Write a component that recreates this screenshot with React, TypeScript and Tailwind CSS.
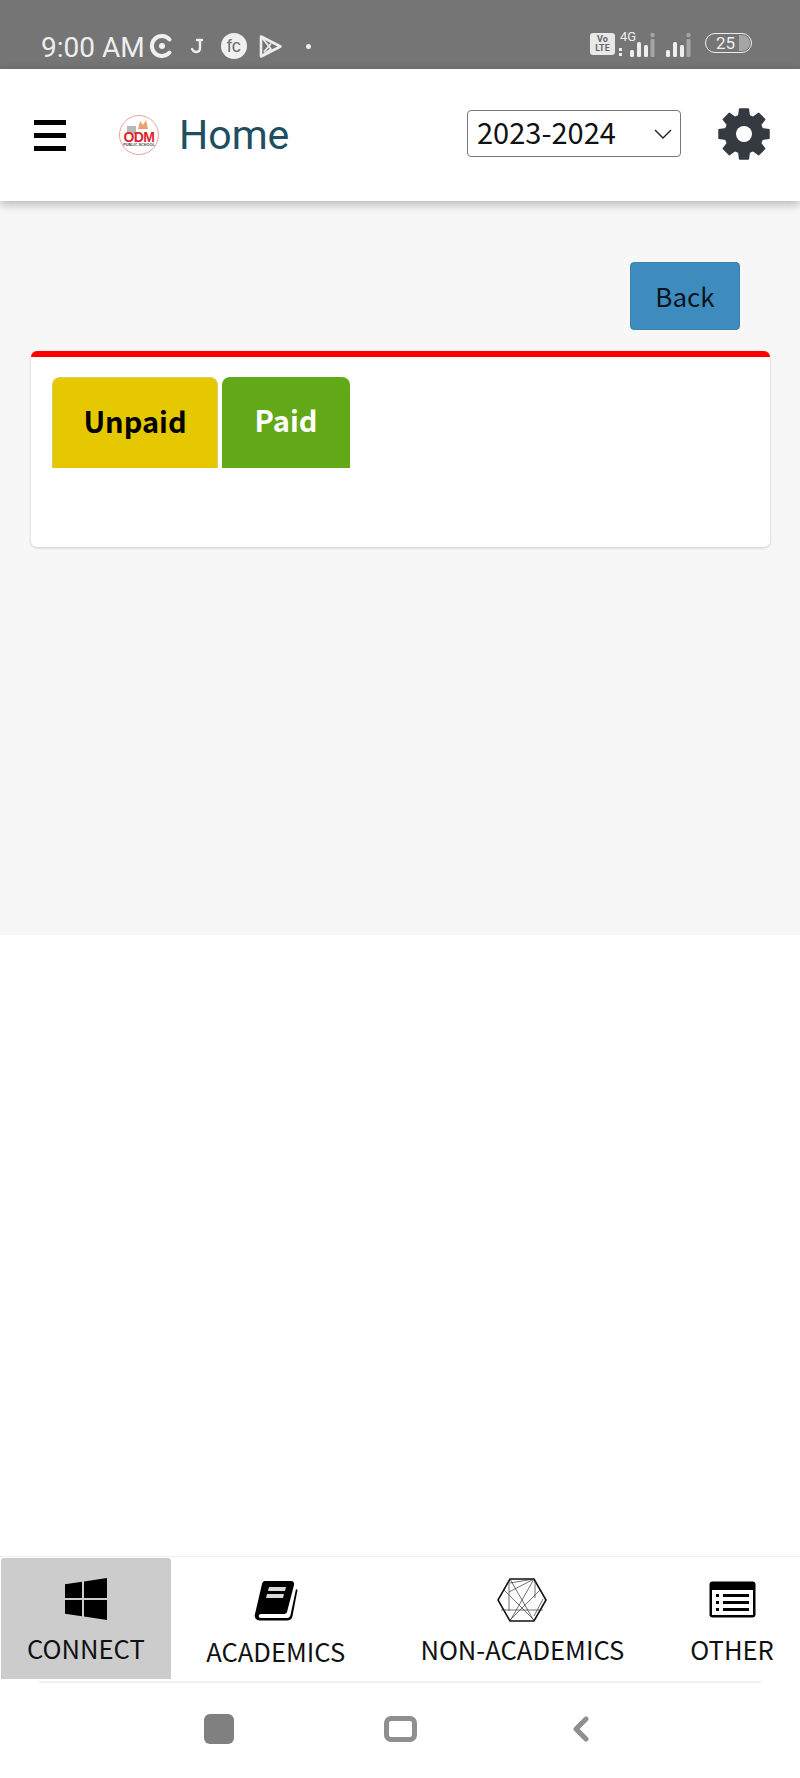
const cjk = "font-['Noto_Sans_CJK_SC','Noto_Sans',sans-serif]";

function gearPath() {
  const pts: string[] = [];
  const teeth = 8;
  for (let i = 0; i < teeth; i++) {
    const a = (i * Math.PI * 2) / teeth - Math.PI / 2;
    const step = Math.PI / teeth;
    const list: [number, number][] = [
      [19, a - step * 0.72],
      [25.4, a - step * 0.44],
      [25.4, a + step * 0.44],
      [19, a + step * 0.72],
    ];
    for (const [r, t] of list) {
      pts.push(`${(27 + r * Math.cos(t)).toFixed(2)} ${(27 + r * Math.sin(t)).toFixed(2)}`);
    }
  }
  return 'M' + pts.join('L') + 'Z';
}

function Gear() {
  return (
    <svg width="54" height="54" viewBox="0 0 54 54" className="text-[#343a40]">
      <path d={gearPath()} fill="currentColor" stroke="currentColor" strokeWidth="1.4" strokeLinejoin="round" />
      <circle cx="27" cy="27" r="8" fill="#fff" />
    </svg>
  );
}

function StatusIcons() {
  return (
    <div className="ml-[4px] flex items-center">
      <svg width="24" height="26" viewBox="0 0 24 26" fill="none" stroke="#f0f0f0">
        <path d="M20.5 6.5A10 10 0 1 0 20.5 19.5" strokeWidth="4" strokeLinecap="round" />
        <circle cx="13" cy="13" r="3" fill="#f0f0f0" stroke="none" />
      </svg>
      <svg width="14" height="18" viewBox="0 0 14 18" fill="none" stroke="#eee" strokeWidth="2.4" strokeLinecap="round" className="ml-[17px]">
        <path d="M7 3h5M10 3v8c0 3-2 4-4 4s-3-1-4-3" />
      </svg>
      <div className="ml-[17px] flex h-[26px] w-[26px] items-center justify-center rounded-full bg-[#f0f0f0] text-[18px] leading-none text-[#6f6f6f] font-['Liberation_Sans',sans-serif]">
        fc
      </div>
      <svg width="23" height="25" viewBox="0 0 23 25" fill="none" stroke="#eee" strokeWidth="2.6" strokeLinejoin="round" className="ml-[12px]">
        <path d="M2 2.5L21.5 12.5L2 22.5Z" />
        <path d="M2 2.5L12 15L2 22.5M12 9.5L5 18" strokeWidth="1.8" />
      </svg>
      <div className="ml-[24px] h-[5px] w-[5px] rounded-full bg-[#eee]" />
    </div>
  );
}

function Signal({ dots }: { dots?: boolean }) {
  return (
    <svg width={dots ? 40 : 26} height="24" viewBox={dots ? '0 0 40 24' : '0 0 26 24'}>
      {dots && (
        <>
          <rect x="1" y="15" width="3" height="3" fill="#eee" />
          <rect x="1" y="20" width="3" height="3" fill="#eee" />
        </>
      )}
      <g transform={dots ? 'translate(12 0)' : ''}>
        <rect x="0" y="17" width="4" height="7" rx="1.5" fill="#eee" />
        <rect x="7" y="9" width="4" height="15" rx="1.5" fill="#eee" />
        <rect x="14" y="12" width="4" height="12" rx="1.5" fill="#eee" />
        <rect x="20.5" y="6" width="4" height="18" rx="1" fill="#a5a5a5" />
        <circle cx="22.5" cy="2" r="2.2" fill="#a5a5a5" />
      </g>
    </svg>
  );
}

function Logo() {
  return (
    <div className="relative flex h-[40px] w-[40px] flex-col items-center justify-center rounded-full border border-[#e8a59c] bg-white pt-[8px]">
      <div className="absolute left-[7px] top-[10px] h-[8px] w-[9px] bg-[#b8b8b8]" />
      <svg width="12" height="11" viewBox="0 0 12 11" className="absolute left-[17px] top-[3px]">
        <path d="M1 10L3 2L6 6L9 1L11 10Z" fill="#e9a26f" />
      </svg>
      <div className="relative text-[14px] font-bold leading-[12px] tracking-[-0.6px] text-[#e0242a] font-['Liberation_Sans',sans-serif]">ODM</div>
      <div className="relative text-[3.8px] font-bold leading-[5px] text-[#444] font-['Liberation_Sans',sans-serif]">PUBLIC SCHOOL</div>
    </div>
  );
}

function Windows() {
  return (
    <svg width="42" height="42" viewBox="0 0 42 42" fill="#000">
      <path d="M0 6.2L17 3.8V20H0ZM19 3.5L42 0V20H19ZM0 22H17V38.2L0 35.8ZM19 22H42V42L19 38.5Z" />
    </svg>
  );
}

function Book() {
  return (
    <svg width="44" height="41" viewBox="0 0 44 41">
      <path d="M11 1H37C39.5 1 40.5 3 40 5L33 32C32.5 33.5 31 34 29.5 34H7C4 34 4 38 7 38H33C35 38 36 37 36.5 35L42 9L43.5 10L38.5 36C38 39 36 40.5 33 40.5H6C2 40.5 0 37.5 1 34L8 4C8.5 2 9.5 1 11 1Z" fill="#000" />
      <path d="M15 7H32L31 11H14ZM13 14H30L29 18H12Z" fill="#fff" fillOpacity="0.85" />
    </svg>
  );
}

function Hexagon() {
  return (
    <svg width="50" height="44" viewBox="0 0 50 44" fill="none" stroke="#111">
      <path d="M13 1H37L49 22L37 43H13L1 22Z" strokeWidth="1.6" />
      <g strokeWidth="0.7" stroke="#333">
        <path d="M13 1L37 43M37 1L13 43M7 12L38 43M43 12L12 43M12 3L12 33M4 32H46M13 5L37 1M37 38L46 21M12 14L37 1M38 3L38 20" />
      </g>
    </svg>
  );
}

function ListCard() {
  return (
    <svg width="47" height="37" viewBox="0 0 47 37">
      <rect x="0.5" y="0.5" width="46" height="36" rx="3" fill="#000" />
      <rect x="3" y="9" width="41" height="25" fill="#fff" />
      <rect x="7" y="13" width="3" height="3" fill="#000" />
      <rect x="7" y="20" width="3" height="3" fill="#000" />
      <rect x="7" y="27" width="3" height="3" fill="#000" />
      <rect x="14" y="13" width="26" height="3" fill="#000" />
      <rect x="14" y="20" width="26" height="3" fill="#000" />
      <rect x="14" y="27" width="26" height="3" fill="#000" />
    </svg>
  );
}

export default function App() {
  return (
    <div className={`flex h-[1778px] w-[800px] flex-col overflow-hidden bg-white ${cjk}`}>
      <div className="flex h-[69px] shrink-0 items-start justify-between bg-[#757575] pt-[31px]">
        <div className="flex items-center pl-[41px]">
          <span className="mt-[3px] text-[28px] leading-[27px] text-[#eeeeee] font-['Roboto',sans-serif]">9:00 AM</span>
          <StatusIcons />
        </div>
        <div className="flex items-start pr-[48px] pt-[2px]">
          <div className="ml-[2px] flex h-[22px] w-[25px] flex-col items-center justify-center rounded-[3px] bg-[#e8e8e8] text-[9px] font-bold leading-[9px] text-[#666] font-['Roboto',sans-serif]">
            <span>Vo</span>
            <span>LTE</span>
          </div>
          <div className="relative ml-[3px] w-[40px]">
            <span className="absolute left-[2px] top-[-2px] text-[13px] leading-[12px] text-[#eee] font-['Roboto',sans-serif]">4G</span>
            <Signal dots />
          </div>
          <div className="ml-[8px]">
            <Signal />
          </div>
          <div className="relative ml-[13px] flex h-[20px] w-[47px] items-center overflow-hidden rounded-full border-[1.5px] border-[#eee] pl-[10px] text-[17px] leading-none text-[#eee] font-['Roboto',sans-serif]">
            25
            <div className="absolute bottom-[1px] right-[1px] top-[1px] w-[11px] rounded-r-full bg-[#a5a5a5]" />
          </div>
        </div>
      </div>

      <header className="relative z-10 flex h-[132px] shrink-0 items-center bg-white pl-[34px] shadow-[0_3px_10px_rgba(0,0,0,0.28)]">
        <div className="flex w-[32px] flex-col gap-[8px]">
          <div className="h-[5px] bg-black" />
          <div className="h-[5px] bg-black" />
          <div className="h-[5px] bg-black" />
        </div>
        <div className="ml-[53px]">
          <Logo />
        </div>
        <h1 className="ml-[20px] w-[288px] text-[41px] font-normal leading-none text-[#1f4e5f] font-['Roboto',sans-serif]">Home</h1>
        <div className="mt-[-3px] flex h-[47px] w-[214px] items-center justify-between rounded-[4px] border border-[#777] pb-[4px] pl-[9px] pr-[8px]">
          <span className="text-[29px] leading-none text-[#111]">2023-2024</span>
          <svg width="18" height="10" viewBox="0 0 18 10" fill="none" stroke="#222" strokeWidth="1.4" className="mt-[4px]">
            <path d="M1 1L9 9L17 1" />
          </svg>
        </div>
        <div className="ml-[36px] mt-[-3px]">
          <Gear />
        </div>
      </header>

      <main className="h-[734px] shrink-0 bg-[#f7f7f7] pl-[31px] pr-[30px] pt-[61px]">
        <div className="flex justify-end pr-[30px]">
          <button className="h-[68px] w-[110px] rounded-[4px] border border-[#3a82b0] bg-[#3e8bbd] text-[26px] leading-none text-[#0a1420]">Back</button>
        </div>
        <section className="mt-[21px] h-[196px] rounded-[6px] border-t-[6px] border-[#ff0000] bg-white pl-[21px] pt-[20px] shadow-[0_1px_3px_rgba(0,0,0,0.18)]">
          <div className="flex gap-[4px]">
            <div className="flex h-[91px] w-[166px] items-center justify-center rounded-t-[8px] border border-b-0 border-[#dccb6a] bg-[#e5c800] pb-[6px] text-[29px] font-bold leading-none text-black">Unpaid</div>
            <div className="flex h-[91px] w-[128px] items-center justify-center rounded-t-[8px] bg-[#62a918] pb-[6px] text-[29px] font-bold leading-none text-white">Paid</div>
          </div>
        </section>
      </main>

      <div className="flex-1" />

      <nav className="relative flex h-[125px] shrink-0 items-stretch border-t border-[#f0f0f0] bg-white pb-[2px] pt-[1px] text-[25.6px] leading-none text-[#111]">
        <div className="ml-[1px] flex w-[170px] flex-col items-center rounded-t-[3px] bg-[#cccccc] pt-[20px]">
          <Windows />
          <span className="mt-[15px] leading-[25px]">CONNECT</span>
        </div>
        <div className="flex w-[210px] flex-col items-center pt-[22px]">
          <Book />
          <span className="mt-[17px] leading-[25px]">ACADEMICS</span>
        </div>
        <div className="flex w-[284px] flex-col items-center pt-[20px]">
          <Hexagon />
          <span className="mt-[14px] leading-[25px]">NON-ACADEMICS</span>
        </div>
        <div className="flex w-[136px] flex-col items-center pt-[23px]">
          <ListCard />
          <span className="mt-[18px] leading-[25px]">OTHER</span>
        </div>
      </nav>

      <div className="mx-auto h-[2px] w-[722px] shrink-0 bg-[#f0f0f0]" />
      <div className="flex h-[95px] shrink-0 items-start pt-[31px]">
        <div className="ml-[204px] h-[30px] w-[30px] rounded-[6px] bg-[#808080]" />
        <div className="ml-[150px] mt-[2px] h-[26px] w-[33px] rounded-[7px] border-[5px] border-[#8f8f8f]" />
        <svg width="16" height="26" viewBox="0 0 16 26" fill="none" stroke="#8f8f8f" strokeWidth="5" strokeLinecap="round" strokeLinejoin="round" className="ml-[156px] mt-[2px]">
          <path d="M13 3L3 13L13 23" />
        </svg>
      </div>
    </div>
  );
}
